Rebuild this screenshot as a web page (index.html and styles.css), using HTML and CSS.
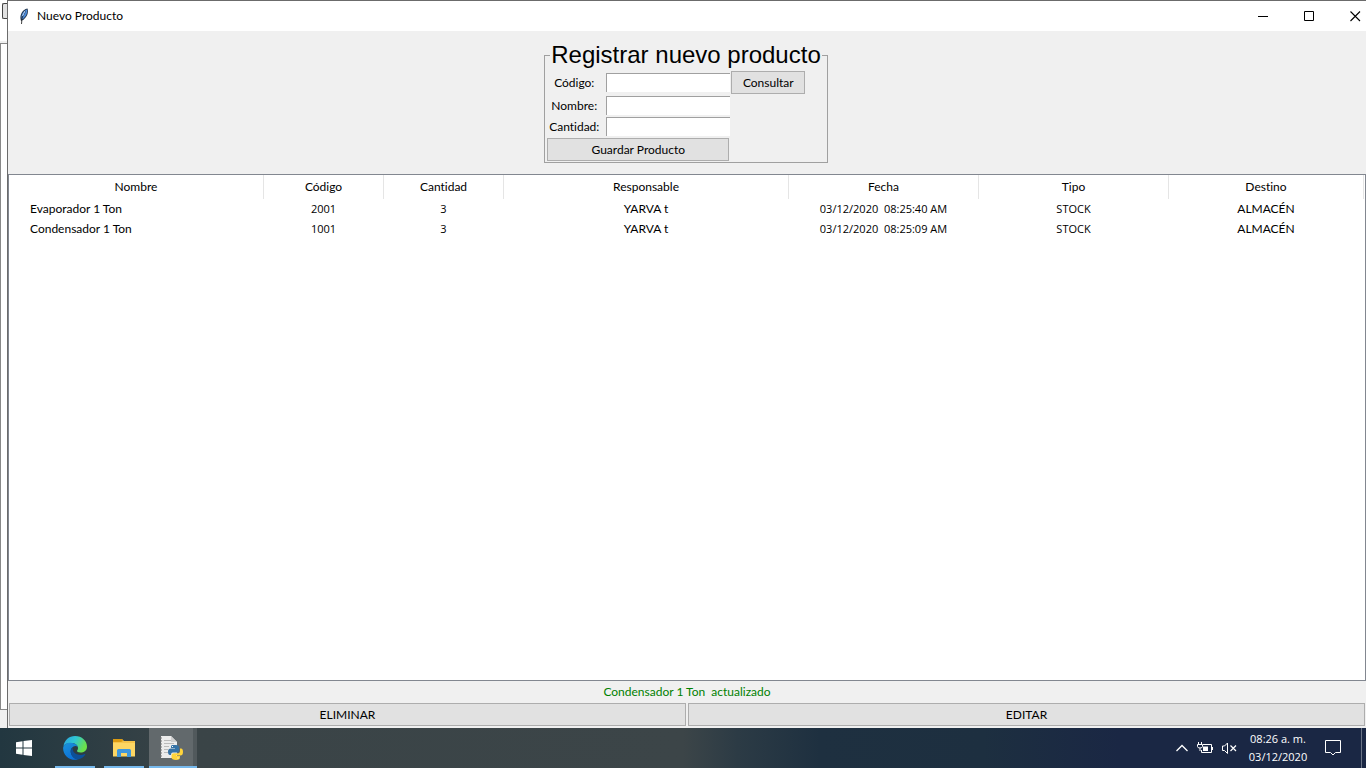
FILE: index.html
```html
<!DOCTYPE html>
<html lang="es">
<head>
<meta charset="utf-8">
<title>Nuevo Producto</title>
<link rel="stylesheet" href="styles.css">
</head>
<body>
<div class="desktop">
  <div class="behind">
    <div class="behind-top"><span class="behind-button"></span></div>
    <div class="behind-list"></div>
    <div class="behind-foot"></div>
  </div>
  <main class="window">
    <header class="titlebar">
      <svg class="feather" width="10" height="16" viewBox="0 0 10 16"><path d="M2 13C0 8 3 1.500 8.500 0.500C10 4 8 10 3 12.500Z" fill="#26384d"/><path d="M2.500 11C2 6 5 2.500 8 1.500C8.800 4.500 7 9 3 11.500Z" fill="#4b8bdc"/><path d="M2.500 16L3 10L6.500 3" fill="none" stroke="#111" stroke-width=".8"/><path d="M3.600 8L6 3" stroke="#b9d9ff"/></svg>
      <h1 class="title">Nuevo Producto</h1>
      <div class="controls">
        <button class="control" aria-label="Minimizar"><svg width="11" height="11" viewBox="0 0 11 11"><path d="M0 5.500H10" stroke="#000"/></svg></button>
        <button class="control" aria-label="Maximizar"><svg width="11" height="11" viewBox="0 0 11 11"><path d="M.5 .5H9.500V9.500H.5Z" fill="none" stroke="#000"/></svg></button>
        <button class="control" aria-label="Cerrar"><svg width="11" height="11" viewBox="0 0 11 11"><path d="M.5 .5L10 10M10 .5L.5 10" stroke="#000" stroke-width="1.100"/></svg></button>
      </div>
    </header>
    <form class="form-area">
      <fieldset class="form-box">
        <legend class="form-title">Registrar nuevo producto</legend>
        <div class="form-grid">
          <label class="label" for="codigo">Código:</label>
          <input class="entry" id="codigo" type="text">
          <button class="button query" type="button">Consultar</button>
          <label class="label" for="nombre">Nombre:</label>
          <input class="entry" id="nombre" type="text">
          <label class="label" for="cantidad">Cantidad:</label>
          <input class="entry" id="cantidad" type="text">
          <button class="button save" type="button">Guardar Producto</button>
        </div>
      </fieldset>
    </form>
    <section class="list">
      <table class="table">
        <colgroup><col><col class="w-small"><col class="w-small"><col class="w-large"><col class="w-medium"><col class="w-medium"><col class="w-last"></colgroup>
        <thead><tr><th>Nombre</th><th>Código</th><th>Cantidad</th><th>Responsable</th><th>Fecha</th><th>Tipo</th><th>Destino</th></tr></thead>
        <tbody>
          <tr><td class="name">Evaporador 1 Ton</td><td class="compact">2001</td><td class="compact">3</td><td>YARVA t</td><td class="compact">03/12/2020&nbsp; 08:25:40 AM</td><td class="compact">STOCK</td><td>ALMACÉN</td></tr>
          <tr><td class="name">Condensador 1 Ton</td><td class="compact">1001</td><td class="compact">3</td><td>YARVA t</td><td class="compact">03/12/2020&nbsp; 08:25:09 AM</td><td class="compact">STOCK</td><td>ALMACÉN</td></tr>
        </tbody>
      </table>
    </section>
    <p class="status">Condensador 1 Ton&nbsp; actualizado</p>
    <div class="actions">
      <button class="button">ELIMINAR</button>
      <button class="button">EDITAR</button>
    </div>
  </main>
</div>
<footer class="taskbar">
  <button class="task start" aria-label="Inicio"><svg width="16" height="16" viewBox="0 0 16 16" fill="#fff"><path d="M0 2.200L6.500 1.300V7.500H0ZM7.500 1.100L16 0V7.500H7.500ZM0 8.500H6.500V14.700L0 13.800ZM7.500 8.500H16V16L7.500 14.900Z"/></svg></button>
  <button class="task open" aria-label="Edge"><svg width="24" height="24" viewBox="0 0 24 24">
    <defs>
      <linearGradient id="eg" x1="0" y1="0" x2="1" y2="0.400"><stop offset="0" stop-color="#2b9fe0"/><stop offset=".5" stop-color="#2fc6d3"/><stop offset="1" stop-color="#6be04a"/></linearGradient>
      <linearGradient id="eb" x1="0" y1="0" x2="0.500" y2="1"><stop offset="0" stop-color="#1c93d8"/><stop offset="1" stop-color="#0b70d8"/></linearGradient>
    </defs>
    <path d="M0.500 10C1.500 4 6 0 12 0C19 0 24 5 24 10.500C24 14.500 21 16.500 17.500 16.500C15 16.500 13.800 15.600 14 14.800C14.600 14 15 13.200 15 12C15 9 12 7 8 7C4.500 7 1.800 8.200 .5 10Z" fill="url(#eg)"/>
    <path d="M.1 12C.3 8.500 4 6.500 8 6.700C11.500 6.900 14 8.500 14.800 11C13.500 9.800 12 9.700 10.500 10.500C8 12 7 14.500 8 17.500C9 20.500 11.500 23 15 23.600C6.500 25.200 0 19 .1 12Z" fill="url(#eb)"/>
    <path d="M9.500 11.200C7 14 7.500 18.500 10 21C11.500 22.800 13.500 23.600 15 23.600C18 23 21 20.800 22.300 18.500C22.500 18 22.200 17.800 21.700 18C17 20 11 18.500 10 14.500C9.700 13.200 9.500 12.300 9.500 11.200Z" fill="#0c4f98"/>
  </svg></button>
  <button class="task open files" aria-label="Explorador de archivos"><svg width="22" height="20" viewBox="0 0 22 20"><path d="M0 1H9L11 3H22V18H0Z" fill="#f6c44a"/><path d="M0 1H9L10 3L8 4H0Z" fill="#dc9b12"/><path d="M0 5H22V18.500H0Z" fill="#fdd663"/><path d="M4 19V12.500Q4 11 5.500 11H16.500Q18 11 18 12.500V19H14V15H8V19Z" fill="#3f97dc"/></svg></button>
  <button class="task open active" aria-label="Python"><svg width="24" height="24" viewBox="0 0 24 24"><path d="M2 0H12L18 6V22H2Z" fill="#ececec"/><path d="M12 0L18 6H12Z" fill="#cfcfcf"/><path d="M1 2H3M1 5H3M1 8H3M1 11H3M1 14H3M1 17H3M1 20H3" stroke="#777"/><path d="M5 4.500H12M5 7.500H15M5 10.500H10M5 13.500H9M5 16.500H9" stroke="#bbb"/><path d="M14 9H17C19 9 20 10 20 11V14C20 16 19 16.500 17.500 16.500H14C12 16.500 12 18 12 19H11C9.500 19 9 17.500 9 15.500C9 13.500 10 12.500 12 12.500H16V12H12V11C12 9.500 12.500 9 14 9Z" fill="#3572a5"/><path d="M21 12.500H22C23.500 12.500 24 14 24 16C24 18.500 23 19.500 21.500 19.500H17V20H21V21.500C21 23 20 24 17 24C14 24 12.500 23 12.500 21.500V19.500C12.500 18 13.500 17.300 15 17.300H18.500C20 17.300 21 16.500 21 15Z" fill="#ffd43b"/><path d="M13 10.500H14M18.500 22H19.500" stroke="#fff"/></svg></button>
  <div class="tray">
    <svg width="12" height="8" viewBox="0 0 12 8"><path d="M.5 7L6 1.500L11.500 7" fill="none" stroke="#fff" stroke-width="1.300"/></svg>
    <svg width="16" height="12" viewBox="0 0 16 12"><path d="M6 2.500H14.500V10.500H4.500V8M15.500 5V8M1.500 0V2M4.500 0V2M.5 2.500H5.500V4.500Q5.500 6 3 6Q.5 6 .5 4.500ZM3 6V9" fill="none" stroke="#fff"/><path d="M6 4.500H11V9H6Z" fill="#fff"/></svg>
    <svg width="15" height="12" viewBox="0 0 15 12"><path d="M.5 4H2.500L5.500 1V11.500L2.500 8.500H.5Z" fill="none" stroke="#fff"/><path d="M8.500 3.500L14 9M14 3.500L8.500 9" stroke="#fff" stroke-width="1.200"/></svg>
    <div class="clock compact"><time>08:26 a. m.</time><time>03/12/2020</time></div>
    <svg width="16" height="16" viewBox="0 0 16 16"><path d="M.5 .5H15.500V12.500H10.500L8 15L5.500 12.500H.5Z" fill="none" stroke="#fff"/></svg>
    <span class="peek"></span>
  </div>
</footer>
</body>
</html>
```

FILE: styles.css
```css
* { box-sizing: border-box; }
body {
  margin: 0;
  height: 100vh;
  display: flex;
  flex-direction: column;
  overflow: hidden;
  font: 12px/16px Lato, "Open Sans", sans-serif;
  font-variant-ligatures: none;
  color: #000;
  background: #f0f0f0;
}
button, input { font: inherit; color: inherit; margin: 0; padding: 0; border: 0; background: none; border-radius: 0; }
svg { display: block; flex: none; }
.compact { font-family: "Open Sans", "Noto Sans", sans-serif; font-size: 11px; }

.desktop { flex: 1; min-height: 0; display: flex; overflow: hidden; }
.behind { width: 7px; display: flex; flex-direction: column; background: #fff; }
.behind-top { height: 43px; padding: 3px 0 0 2px; border-bottom: 2px solid #f0f0f0; }
.behind-button { display: block; height: 16px; background: #e1e1e1; border: 1px solid #444; border-right: 0; border-radius: 2px 0 0 2px; }
.behind-list { flex: 1; border: 1px solid #888; border-right: 0; }
.behind-foot { height: 18px; background: #f0f0f0; }

.window {
  flex: 1;
  min-width: 0;
  display: flex;
  flex-direction: column;
  border: solid #6b6b6b;
  border-width: 1px 0 0 1px;
  background: #f0f0f0;
}
.titlebar { height: 30px; display: flex; align-items: center; padding-left: 11px; background: #fff; }
.title { flex: 1; margin: 0 0 0 8px; font-size: 12px; font-weight: 400; }
.controls { display: flex; }
.control { width: 46px; height: 30px; display: grid; place-items: center; }
.control:last-child { margin-right: -12px; }

.form-area { display: flex; justify-content: center; padding: 12px 2px 11px 0; }
.form-box { margin: 0; padding: 4px 5px 1px 2px; border: 1px solid #a0a0a0; }
.form-title { margin-left: 3px; padding: 0 1px; font: 24px/24px "Liberation Sans", Arial, sans-serif; }
.form-grid { display: grid; grid-template-columns: 58px 124px auto; column-gap: 1px; row-gap: 2px; justify-content: start; align-items: center; }
.label { grid-column: 1; padding-right: 4px; text-align: center; white-space: nowrap; line-height: 19px; }
.entry { width: 124px; height: 19px; padding: 0 3px; background: #fff; border: solid #a0a0a0; border-width: 1px 0 0 1px; }
.button { height: 23px; border: 1px solid #adadad; background: #e1e1e1; }
.query { width: 74px; }
.save { grid-column: 1 / 3; width: 182px; }

.list { flex: 1; min-height: 0; padding-right: 1px; border: 1px solid #828790; background: #fff; }
.table { width: 100%; table-layout: fixed; border-collapse: collapse; }
.w-small { width: 120px; }
.w-medium { width: 190px; }
.w-large { width: 285px; }
.w-last { width: 195px; }
.table th { height: 24px; padding: 0; font-weight: 400; border-right: 1px solid #e5e5e5; }
.table td { height: 20px; padding: 0; text-align: center; white-space: nowrap; }
.table .name { padding-left: 21px; text-align: left; }

.status { margin: 0; height: 22px; line-height: 22px; text-align: center; color: #008000; }
.actions { display: grid; grid-template-columns: 1fr 1fr; gap: 2px; padding: 0 1px 2px; }

.taskbar {
  height: 40px;
  display: flex;
  background: linear-gradient(90deg, #223740 0, #3a4447 14%, #3c4548 50%, #2c3b45 54%, #1e3040 60%, #1d2f40 72%, #1a2744 82%, #1a2744 100%);
  color: #fff;
}
.task { width: 48px; display: grid; place-items: center; }
.start { width: 51px; padding-right: 3px; }
.open { position: relative; }
.open::after { content: ""; position: absolute; left: 4px; right: 4px; bottom: 0; height: 2px; background: #76b9ed; }
.files { margin-left: 1px; }
.active { margin-left: 1px; background: #62696c; border-right: 4px solid #51595c; }
.active::after { left: 0; right: -4px; }
.tray { margin-left: auto; display: flex; align-items: center; }
.tray svg { margin-right: 9px; }
.clock { min-width: 60px; display: flex; flex-direction: column; text-align: center; line-height: 18px; margin: 0 17px 0 2px; }
.peek { width: 5px; height: 40px; margin-left: 11px; border-left: 1px solid #6a7486; }
```
